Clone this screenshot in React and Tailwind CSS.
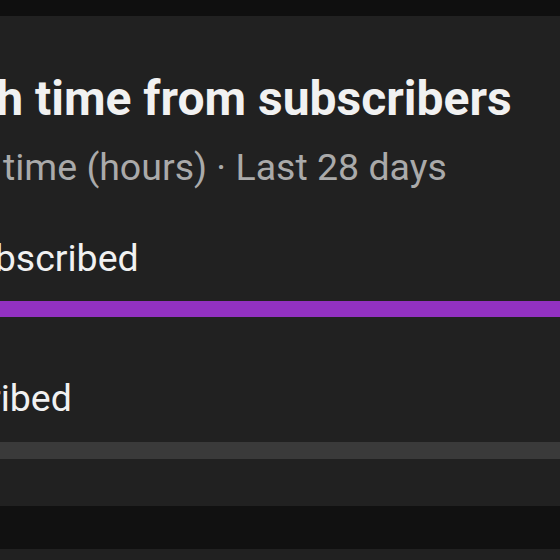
export default function App() {
  const font = { fontFamily: "Roboto, 'Noto Sans', sans-serif" };
  return (
    <div className="w-[560px] h-[560px] overflow-hidden bg-[#0f0f0f] pt-4" style={font}>
      <div className="h-[490px] bg-[#212121] overflow-hidden">
        <div className="ml-[-112px] w-[760px] pt-[55px] flex flex-col">
          <div className="text-[48px] leading-[56px] font-bold text-[#f1f1f1] whitespace-nowrap">
            Watch time from subscribers
          </div>
          <div className="mt-[18px] text-[37.5px] leading-[44px] text-[#aaaaaa] whitespace-nowrap">
            Watch time (hours) · Last 28 days
          </div>
          <div className="mt-[47px] ml-[-3px] text-[37.5px] leading-[44px] text-[#f1f1f1] whitespace-nowrap">
            Not subscribed
          </div>
          <div className="mt-[21px] h-4 bg-[#9231c1]" />
          <div className="mt-[59px] ml-[-3px] text-[37.5px] leading-[44px] text-[#f1f1f1] whitespace-nowrap">
            Subscribed
          </div>
          <div className="mt-[22px] h-[17px] bg-[#3a3a3a]" />
        </div>
      </div>
      <div className="h-[43px] bg-[#111111]" />
      <div className="h-[40px] bg-[#212121]" />
    </div>
  );
}
